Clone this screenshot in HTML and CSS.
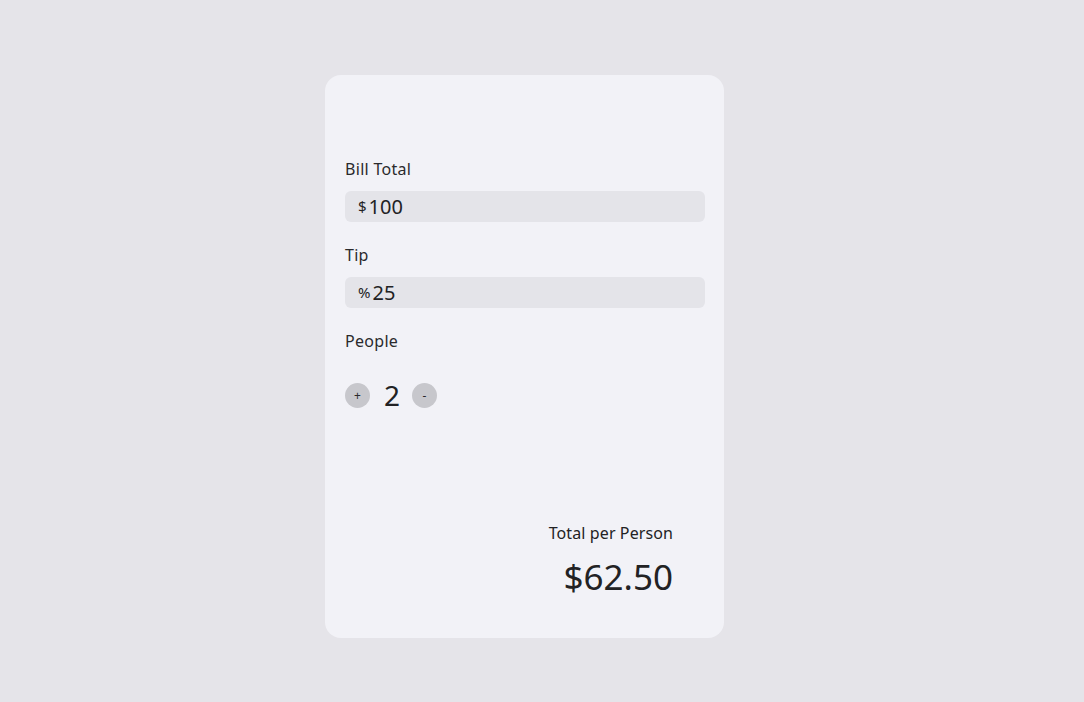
FILE: index.html
```html
<!DOCTYPE html>
<html>
<head>
<meta charset="utf-8">
<link rel="stylesheet" href="styles.css">
</head>
<body>
<div class="card">
  <div class="field">
    <label class="label">Bill Total</label>
    <div class="input"><span class="unit">$</span><span class="value">100</span></div>
  </div>
  <div class="field">
    <label class="label">Tip</label>
    <div class="input"><span class="unit">%</span><span class="value">25</span></div>
  </div>
  <div class="field">
    <label class="label">People</label>
    <div class="stepper">
      <button class="step">+</button>
      <span class="count">2</span>
      <button class="step">-</button>
    </div>
  </div>
  <div class="result">
    <div class="result-label">Total per Person</div>
    <div class="result-value">$62.50</div>
  </div>
</div>
</body>
</html>
```
FILE: styles.css
```css
html, body {
  margin: 0;
  padding: 0;
}
body {
  background: #e5e4e9;
  font-family: "Noto Sans", "Open Sans", sans-serif;
  color: #222224;
  height: 702px;
}
.card {
  box-sizing: border-box;
  width: 399px;
  height: 563px;
  margin: 75px 0 0 325px;
  background: #f2f2f7;
  border-radius: 16px;
  padding: 84px 19px 0 20px;
  display: flex;
  flex-direction: column;
}
.field {
  display: flex;
  flex-direction: column;
  margin-bottom: 23px;
}
.label {
  font-size: 16px;
  line-height: 20px;
  height: 20px;
  color: #2a2a2c;
  margin-bottom: 12px;
  letter-spacing: 0.3px;
}
.input {
  height: 31px;
  background: #e4e4e9;
  border-radius: 6px;
  display: flex;
  align-items: center;
  padding-left: 13px;
}
.unit {
  font-size: 15px;
  margin-right: 2px;
  position: relative;
  top: -1px;
}
.value {
  font-size: 20px;
}
.stepper {
  display: flex;
  align-items: center;
  margin-top: 15px;
  height: 34px;
}
.step {
  width: 25px;
  height: 25px;
  border-radius: 50%;
  border: none;
  background: #c7c7cc;
  color: #2a2a2c;
  font-family: inherit;
  font-size: 12px;
  padding: 0;
  display: flex;
  align-items: center;
  justify-content: center;
}
.count {
  font-size: 28px;
  margin: 0 12px 0 14px;
  line-height: 34px;
}
.result {
  margin-top: 88px;
  align-self: flex-end;
  margin-right: 32px;
  display: flex;
  flex-direction: column;
  align-items: flex-end;
}
.result-label {
  font-size: 16px;
  line-height: 20px;
  letter-spacing: 0.1px;
}
.result-value {
  font-size: 35px;
  line-height: 44px;
  margin-top: 12px;
}
```
